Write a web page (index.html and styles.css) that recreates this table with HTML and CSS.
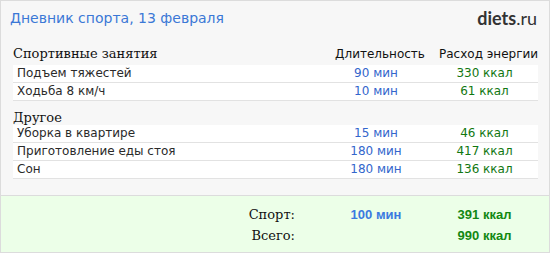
FILE: index.html
```html
<!DOCTYPE html>
<html lang="ru">
<head>
<meta charset="utf-8">
<link rel="stylesheet" href="styles.css">
</head>
<body>
<div class="box">
  <div class="head">
    <div class="title">Дневник спорта, 13 февраля</div>
    <div class="logo"><b>diets</b>.ru</div>
  </div>
  <table class="log">
    <tr class="cat">
      <td class="name">Спортивные занятия</td>
      <td class="colh">Длительность</td>
      <td class="colh">Расход энергии</td>
    </tr>
    <tr class="row"><td class="name">Подъем тяжестей</td><td class="min">90 мин</td><td class="kcal">330 ккал</td></tr>
    <tr class="row"><td class="name">Ходьба 8 км/ч</td><td class="min">10 мин</td><td class="kcal">61 ккал</td></tr>
    <tr class="cat cat2">
      <td class="name">Другое</td><td></td><td></td>
    </tr>
    <tr class="row"><td class="name">Уборка в квартире</td><td class="min">15 мин</td><td class="kcal">46 ккал</td></tr>
    <tr class="row"><td class="name">Приготовление еды стоя</td><td class="min">180 мин</td><td class="kcal">417 ккал</td></tr>
    <tr class="row"><td class="name">Сон</td><td class="min">180 мин</td><td class="kcal">136 ккал</td></tr>
  </table>
  <div class="totals">
    <div class="trow"><span class="lbl">Спорт:</span><span class="tmin">100 мин</span><span class="tkcal">391 ккал</span></div>
    <div class="trow"><span class="lbl">Всего:</span><span class="tmin"></span><span class="tkcal">990 ккал</span></div>
  </div>
</div>
</body>
</html>
```
FILE: styles.css
```css
html, body { margin: 0; padding: 0; }
body { width: 550px; height: 253px; background: #fff; }
.box {
  box-sizing: border-box;
  width: 550px;
  height: 253px;
  border: 1px solid #dcdcdc;
  background: #f7f7f7;
  display: flex;
  flex-direction: column;
}
.head {
  display: flex;
  justify-content: space-between;
  align-items: center;
  padding: 6px 12px 0 9px;
  height: 22px;
}
.title {
  font-family: "DejaVu Sans", sans-serif;
  font-size: 14px;
  color: #3b78d6;
}
.logo {
  font-family: "Lato", sans-serif;
  font-size: 18px;
  color: #333;
}
.logo b { font-weight: 700; }
.log {
  border-collapse: collapse;
  margin: 17px 0 0 12px;
  width: 525px;
  table-layout: fixed;
}
.log td { padding: 0; line-height: 15px; }
.cat td {
  font-family: "DejaVu Serif", serif;
  font-size: 13px;
  color: #111;
  height: 19px;
  box-sizing: border-box;
  vertical-align: top;
  padding-top: 0;
}
.cat2 td { height: 24px; padding-top: 9px; }
.cat .colh {
  font-family: "DejaVu Sans", sans-serif;
  font-size: 12px;
  text-align: center;
  white-space: nowrap;
  padding-top: 1px;
  padding-left: 8px;
}
.cat td:nth-child(1) { width: 308px; }
.cat td:nth-child(2) { width: 110px; }
.row td {
  background: #fff;
  border-bottom: 1px solid #e2e2e2;
  height: 17px;
  font-family: "DejaVu Sans", sans-serif;
  font-size: 12px;
  vertical-align: middle;
}
.row .name { padding-left: 4px; color: #2a2a2a; }
.min { text-align: center; color: #3366cc; }
.kcal { text-align: center; color: #117711; }
.totals {
  margin-top: auto;
  border-top: 1px solid #dcdcdc;
  background: #ecffe8;
  height: 57px;
  box-sizing: border-box;
  padding: 11px 0 0 12px;
  display: flex;
  flex-direction: column;
  gap: 6px;
}
.trow {
  display: grid;
  grid-template-columns: 282px 26px 110px 107px;
  height: 15px;
  line-height: 15px;
}
.lbl {
  grid-column: 1;
  text-align: right;
  font-family: "DejaVu Serif", serif;
  font-size: 13px;
  color: #111;
}
.tmin, .tkcal {
  font-family: "Liberation Sans", sans-serif;
  font-weight: 700;
  font-size: 13px;
  text-align: center;
}
.tmin { grid-column: 3; color: #3a7ae0; }
.tkcal { grid-column: 4; color: #128812; }
```
